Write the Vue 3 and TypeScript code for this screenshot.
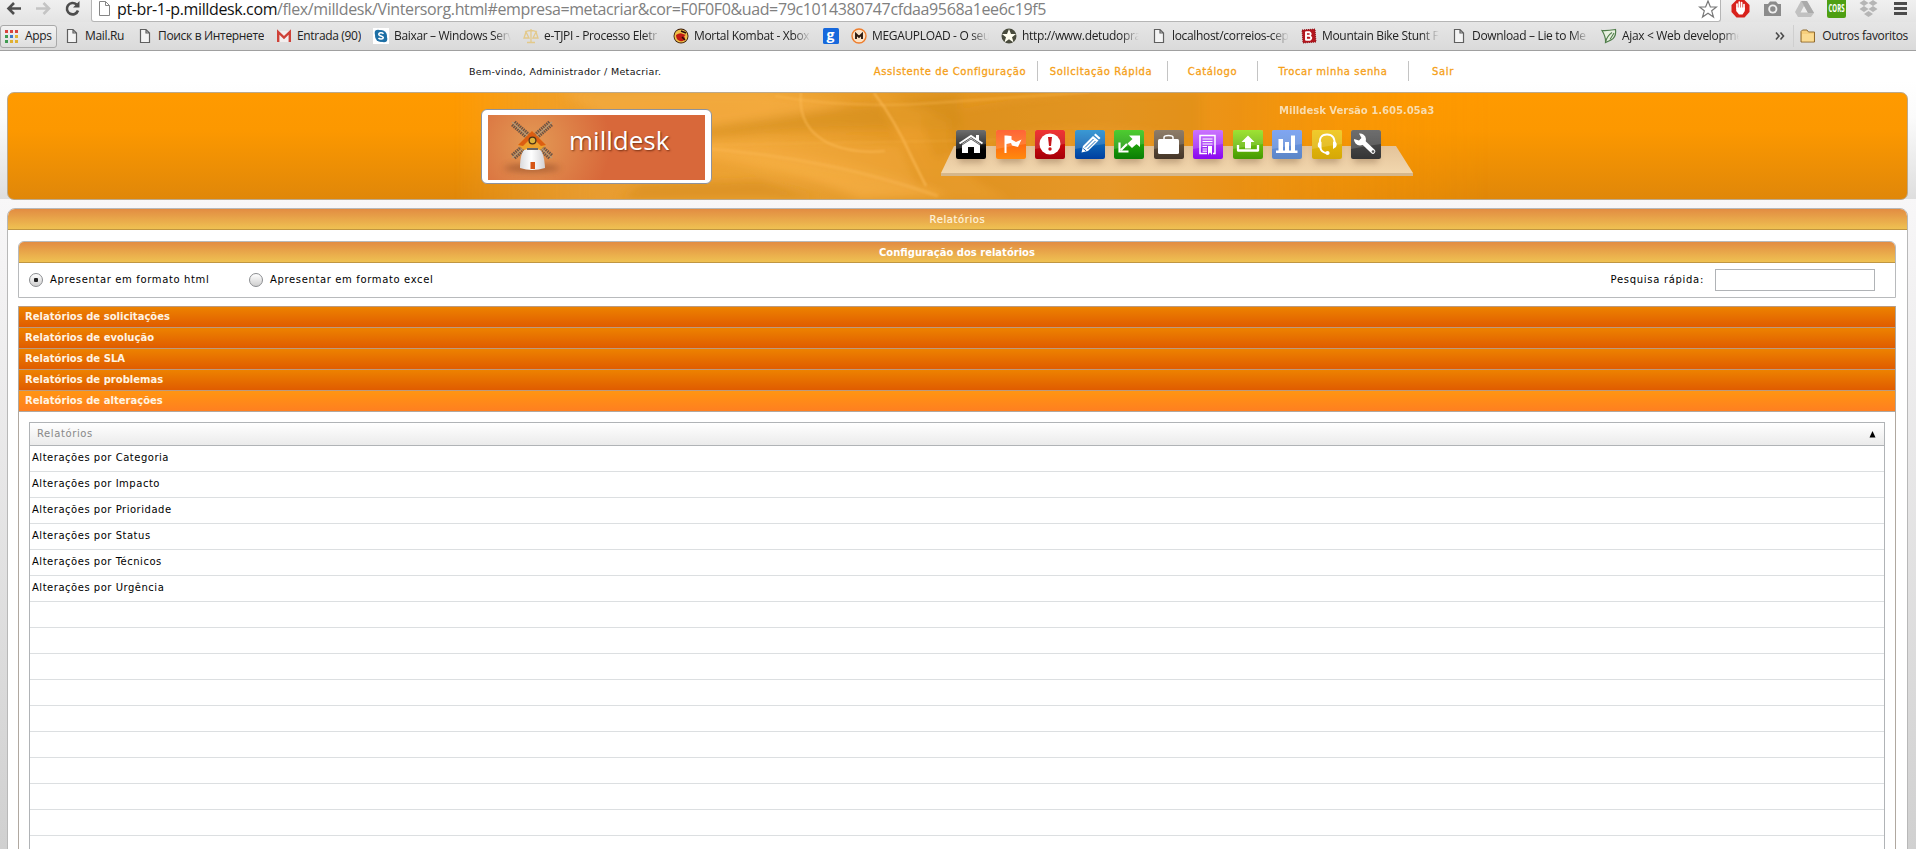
<script setup lang="ts">
interface Bookmark {
  icon: string
  label: string
  width: number
  faded?: boolean
}

const bookmarks: Bookmark[] = [
  { icon: 'page', label: 'Mail.Ru', width: 73 },
  { icon: 'page', label: 'Поиск в Интернете', width: 139 },
  { icon: 'gmail', label: 'Entrada (90)', width: 97 },
  { icon: 'skype', label: 'Baixar – Windows Serv', width: 150, faded: true },
  { icon: 'scale', label: 'e-TJPI - Processo Eletr', width: 150, faded: true },
  { icon: 'dragon', label: 'Mortal Kombat - Xbox', width: 150, faded: true },
  { icon: 'g', label: '', width: 28 },
  { icon: 'mega', label: 'MEGAUPLOAD - O seu', width: 150, faded: true },
  { icon: 'star', label: 'http://www.detudopra', width: 150, faded: true },
  { icon: 'page', label: 'localhost/correios-cep', width: 150, faded: true },
  { icon: 'b', label: 'Mountain Bike Stunt Fr', width: 150, faded: true },
  { icon: 'page', label: 'Download – Lie to Me', width: 150, faded: true },
  { icon: 'leaf', label: 'Ajax < Web developme', width: 150, faded: true },
]

const appColors = ['#d8433c', '#d8433c', '#d8433c', '#3f9b50', '#3c78c8', '#e0b030', '#3f9b50', '#e0b030', '#e0b030']

const links = [
  { label: 'Assistente de Configuração', cls: 'l1' },
  { label: 'Solicitação Rápida', cls: 'l2' },
  { label: 'Catálogo', cls: 'l3' },
  { label: 'Trocar minha senha', cls: 'l4' },
  { label: 'Sair', cls: 'l5' },
]

const tools = ['home', 'flag', 'alert', 'pencil', 'arrows', 'case', 'doc', 'upload', 'chart', 'headset', 'wrench']

const sections = [
  'Relatórios de solicitações',
  'Relatórios de evolução',
  'Relatórios de SLA',
  'Relatórios de problemas',
  'Relatórios de alterações',
]

const reports = [
  'Alterações por Categoria',
  'Alterações por Impacto',
  'Alterações por Prioridade',
  'Alterações por Status',
  'Alterações por Técnicos',
  'Alterações por Urgência',
]
const emptyRows = 10
</script>

<template>
  <div class="screen">
    <div class="toolbar">
      <svg class="nav" width="91" height="21" viewBox="0 0 91 21">
        <path d="M21 8.5H9M14 3L8.5 8.5L14 14" fill="none" stroke="#4d4d4d" stroke-width="2.6" />
        <path d="M36 8.5H48M43.500 3L49 8.500L43.500 14" fill="none" stroke="#c4c4c4" stroke-width="2.600" />
        <path d="M76.500 4.500A5.700 5.700 0 1 0 78 10.500" fill="none" stroke="#4d4d4d" stroke-width="2.600" />
        <path d="M79.500 1V7.500H73Z" fill="#4d4d4d" />
      </svg>
      <div class="omnibox">
        <svg width="11" height="16" viewBox="0 0 11 16"><path d="M.5 1.500H6.500L10.500 5.500V15.500H.5ZM6.500 1.500V5.500H10.500" fill="#fff" stroke="#858585" /></svg>
        <span class="url"><b>pt-br-1-p.milldesk.com</b>/flex/milldesk/Vintersorg.html#empresa=metacriar&amp;cor=F0F0F0&amp;uad=79c1014380747cfdaa9568a1ee6c19f5</span>
        <svg class="fav" width="20" height="20" viewBox="0 0 20 20"><path d="M10 1L12.400 7H18.500L13.700 10.800L15.500 17L10 13.300L4.500 17L6.300 10.800L1.500 7H7.600Z" fill="#fff" stroke="#777" stroke-width="1.200" /></svg>
      </div>
      <svg class="exts" width="195" height="21" viewBox="1721 0 195 21">
        <path d="M1736.500 0H1744.500L1749.500 5V12L1744.500 17.500H1736.500L1731.500 12V5Z" fill="#d8221c" />
        <path d="M1737 8V4M1739.300 8V2M1741.600 8V2.500M1744 9V4.500" stroke="#fff" stroke-width="1.700" stroke-linecap="round" />
        <path d="M1736.200 7.500H1744.800V11L1742.500 14.500H1739L1736.200 11Z" fill="#fff" />
        <path d="M1764 4H1768L1770 1.500H1776L1778 4H1781V16H1764Z" fill="#8b8b8b" /><circle cx="1772.800" cy="9" r="4.600" fill="#eee" /><circle cx="1772.800" cy="9" r="2.700" fill="#8b8b8b" />
        <path d="M1801 1H1807L1814 13L1811 17H1798L1795 12Z" fill="#c1c1c1" /><path d="M1804 6L1808 12.500H1800.500Z" fill="#eee" /><path d="M1807 1L1814 13H1808L1801.500 1Z" fill="#aaa" />
        <rect x="1827" y="-2" width="19" height="20" rx="2" fill="#4e9f12" />
        <text x="1828.500" y="12" font-size="10" font-weight="700" fill="#fff" textLength="16" lengthAdjust="spacingAndGlyphs" font-family="Open Sans, sans-serif">CORS</text>
        <path d="M1864 0L1868.500 3L1864 6L1859.500 3ZM1873 0L1877.500 3L1873 6L1868.500 3ZM1864 6L1868.500 9L1864 12L1859.500 9ZM1873 6L1877.500 9L1873 12L1868.500 9ZM1868.500 11L1873 14L1868.500 17L1864 14Z" fill="#b5b5b5" />
        <path d="M1894 3.500H1907M1894 8.500H1907M1894 13.500H1907" stroke="#4b4b4b" stroke-width="2.800" />
      </svg>
    </div>

    <div class="bookmarks">
      <div class="apps">
        <div class="dots"><i v-for="(c, i) in appColors" :key="i" :style="{ background: c }"></i></div>
        <span>Apps</span>
      </div>
      <div v-for="(b, i) in bookmarks" :key="i" class="bm" :style="{ width: b.width + 'px' }">
        <svg width="16" height="16" viewBox="0 0 16 16">
          <path v-if="b.icon === 'page'" d="M3.500 1.500H9L12.500 5V14.500H3.500ZM9 1.500V5H12.500" fill="#f4f4f4" stroke="#5f5f5f" stroke-width="1.200" />
          <g v-else-if="b.icon === 'gmail'"><path d="M1 3H15V14H1Z" fill="#f3eeee" /><path d="M2.200 14V4L8 9.500L13.800 4V14" fill="none" stroke="#cf4138" stroke-width="2.400" /></g>
          <g v-else-if="b.icon === 'skype'"><rect width="16" height="16" fill="#fff" /><circle cx="8" cy="8" r="6" fill="#1d6fa5" /><circle cx="5" cy="5" r="3.300" fill="#1d6fa5" /><circle cx="11" cy="11" r="3.300" fill="#1d6fa5" /><path d="M10.500 5.800C9 4.200 5.500 4.600 5.800 6.500C6.200 8.300 10.200 7.600 10.300 9.600C10.200 11.600 6.500 11.500 5.500 10" fill="none" stroke="#fff" stroke-width="1.500" /></g>
          <path v-else-if="b.icon === 'scale'" d="M8 1V14M2 4Q8 1 14 4M3 4L1 10H6ZM13 4L10 10H15ZM4 14.500H12" fill="none" stroke="#e3c98a" stroke-width="1.300" />
          <g v-else-if="b.icon === 'dragon'"><circle cx="8" cy="8" r="7.500" fill="#3a1a0a" /><circle cx="8" cy="8" r="6.600" fill="#efc04a" /><path d="M3 7Q7 4 10 6L13 7Q10 8 12 10Q11 14 7 13Q3 12 3 7Z" fill="#c11a12" /><path d="M8 3L13 5M9 9L12 12" stroke="#2a0d05" stroke-width="1.500" /></g>
          <g v-else-if="b.icon === 'g'"><rect width="16" height="16" rx="1.500" fill="#1668dc" /><text x="3.600" y="11.500" font-size="14" font-weight="700" fill="#fff" font-family="Open Sans, sans-serif">g</text></g>
          <g v-else-if="b.icon === 'mega'"><circle cx="8" cy="8" r="7" fill="#fbe3c8" stroke="#ee7d2c" stroke-width="1.400" /><path d="M5 11V6L8 9L11 6V11" fill="none" stroke="#2d1a10" stroke-width="1.900" /></g>
          <g v-else-if="b.icon === 'star'"><circle cx="8" cy="8" r="7.500" fill="#494b3d" /><path d="M8 1L10 6H15L11 9.300L12.600 14.500L8 11.300L3.400 14.500L5 9.300L1 6H6Z" fill="#fffef0" /></g>
          <g v-else-if="b.icon === 'b'"><path d="M1 2L14 1L15 14L2 15Z" fill="#b3161e" stroke="#8c1016" stroke-dasharray="1 1" /><path d="M5 3.500V12.500M5 4.200H8.500Q11 6 8.500 7.800H5M8.500 7.800Q12 10 8.800 11.800H5" fill="none" stroke="#fff" stroke-width="1.900" /></g>
          <g v-else><path d="M1 2.500Q6 3 14.500 1.500Q15.500 9 10 12L4.500 14.500Q5 9 1 2.500Z" fill="#e8f0e0" stroke="#4f7d4a" stroke-width="1.200" /><path d="M4.500 14Q6 8 11 4.500M9 11.500L13 5" fill="none" stroke="#4f7d4a" stroke-width="1.100" /></g>
        </svg>
        <span v-if="b.label" :class="{ faded: b.faded }">{{ b.label }}</span>
      </div>
      <div class="others">
        <svg width="10" height="10" viewBox="0 0 10 10"><path d="M1 1.500L4 5L1 8.500M5.500 1.500L8.500 5L5.500 8.500" fill="none" stroke="#4a4a4a" stroke-width="1.600" /></svg>
        <i class="sep"></i>
        <svg class="folder" width="17" height="14" viewBox="0 0 17 14"><path d="M1 13V2.500L2.500 1H7L8.500 3H14.500V13Z" fill="#f7cf7c" stroke="#8f6a2f" /><path d="M2 12.300V5H13.500V12.300Z" fill="#fbdb91" /></svg>
        <span>Outros favoritos</span>
      </div>
    </div>

    <div class="head">
      <div class="top">
        <span class="welcome">Bem-vindo, Administrador / Metacriar.</span>
        <a v-for="l in links" :key="l.cls" :class="l.cls"><span>{{ l.label }}</span></a>
      </div>
      <div class="banner">
        <svg class="waves" width="1900" height="107" viewBox="7 92 1900 107">
          <defs>
            <linearGradient id="base" x1="7" x2="1907" gradientUnits="userSpaceOnUse">
              <stop offset=".235" stop-color="#e9a94b" stop-opacity="0" />
              <stop offset=".31" stop-color="#e9a038" />
              <stop offset=".4" stop-color="#eda83f" />
              <stop offset=".49" stop-color="#de9526" />
              <stop offset=".58" stop-color="#e79a2d" />
              <stop offset=".65" stop-color="#ea9216" />
              <stop offset=".78" stop-color="#ff9a00" stop-opacity="0" />
            </linearGradient>
            <filter id="soft" x="-20%" y="-20%" width="140%" height="140%"><feGaussianBlur stdDeviation="5" /></filter>
            <filter id="thin"><feGaussianBlur stdDeviation=".9" /></filter>
          </defs>
          <rect x="7" y="92" width="1900" height="107" fill="url(#base)" />
          <g filter="url(#soft)">
            <path d="M560 92L760 92L850 104L700 130L610 120Z" fill="#f4b050" opacity=".6" />
            <path d="M700 128Q840 106 960 94V130Q860 125 700 138Z" fill="#c98b1e" opacity=".55" />
            <path d="M700 144Q830 150 950 197L860 199Q780 165 690 155Z" fill="#ffbd58" opacity=".6" />
            <path d="M700 138L900 145L920 190L700 150Z" fill="#f2ad48" opacity=".6" />
            <path d="M875 92L950 120Q940 170 1010 199H930Z" fill="#ffb64a" opacity=".25" />
            <path d="M640 185L760 180L820 199H620Z" fill="#d28c1e" opacity=".6" />
            <path d="M920 120Q1000 96 1100 92H1200V140Q1040 110 935 160Z" fill="#cc8a1c" opacity=".35" />
          </g>
          <g filter="url(#thin)" fill="none" stroke="#ffc46a">
            <path d="M801 92Q797 128 830 144Q855 154 885 151" stroke-width="1.500" opacity=".75" />
            <path d="M874 93Q895 120 912 158L926 186" stroke-width="2" opacity=".75" />
            <path d="M700 148Q830 158 938 196" stroke-width="3" opacity=".4" />
            <path d="M775 96Q850 109 935 103Q1010 98 1090 92" stroke-width="2" opacity=".4" />
            <path d="M700 145Q850 142 1000 140" stroke-width="2" opacity=".2" />
          </g>
        </svg>

        <div class="logo">
          <svg width="217" height="65" viewBox="488 115 217 65">
            <defs>
              <radialGradient id="glow" cx="532" cy="144" r="78" gradientUnits="userSpaceOnUse"><stop offset="0" stop-color="#e39a55" /><stop offset="1" stop-color="#d8683a" /></radialGradient>
              <linearGradient id="tower"><stop offset="0" stop-color="#d9dadd" /><stop offset=".45" stop-color="#fff" /><stop offset="1" stop-color="#d3d2d4" /></linearGradient>
              <filter id="sh" x="-30%" y="-80%" width="160%" height="260%"><feGaussianBlur stdDeviation="3" /></filter>
            </defs>
            <rect x="488" y="115" width="217" height="65" fill="url(#glow)" />
            <ellipse cx="532" cy="168" rx="28" ry="4" fill="#8e4a26" opacity=".6" filter="url(#sh)" />
            <g stroke="#4d4743" stroke-width="7" stroke-dasharray="1.500 .8" opacity=".8">
              <path d="M530 138L513 123M534 138L551 123M530 142L513 157M534 142L551 157" />
            </g>
            <path d="M532 140L512 122M532 140L552 122M532 140L512 158M532 140L552 158" stroke="#b99a76" stroke-width="1.400" />
            <path d="M520 168Q520 149 528 148H537Q544 149 545 168Q532 172 520 168Z" fill="url(#tower)" />
            <path d="M530.500 169V162H535V169Z" fill="#d65514" />
            <path d="M532 131L546 145L540 150L532 148L524 150L518 145Z" fill="#eda22c" />
            <path d="M532 131L518 145L523 146L532 137L541 146L546 145Z" fill="#dc5e12" />
            <circle cx="532.500" cy="140.500" r="3.400" fill="#ddb33b" stroke="#4b3217" stroke-width="1.300" />
            <path d="M527 149H538" stroke="#6a6664" stroke-width="2" />
          </svg>
          <span>milldesk</span>
        </div>

        <div class="version">Milldesk Versão 1.605.05a3</div>
        <div class="dock">
          <svg class="shelf" width="474" height="31" viewBox="940 146 474 31">
            <defs><linearGradient id="plank" x2="0" y2="1"><stop offset="0" stop-color="#e3c39a" /><stop offset="1" stop-color="#f2d7ae" /></linearGradient></defs>
            <path d="M954 146H1396L1413 173H941Z" fill="url(#plank)" />
            <path d="M941 173H1413V176H941Z" fill="#d5b78c" />
          </svg>
          <div class="tools">
            <div v-for="t in tools" :key="t" class="tool" :class="t">
              <svg width="30" height="29" viewBox="0 0 30 29">
                <path d="M0 0H30V14Q15 16 0 19Z" fill="#fff" opacity=".15" />
                <g v-if="t === 'home'" fill="#fff"><path d="M6 14L15 8L24 14V23H18V17H12V23H6Z" /><path d="M3.500 13.500L15 6L26.500 13.500" fill="none" stroke="#fff" stroke-width="2" /><path d="M5.500 15.300L15 9L24.500 15.300" fill="none" stroke="#333" stroke-width=".8" /><rect x="20" y="5" width="3" height="5" /></g>
                <path v-else-if="t === 'flag'" d="M8.500 5.500H10.500L15.500 6V9.500L20 12L25.500 9.500L22 17L16 15.500L15 13L10.500 14V23H8.500Z" fill="#fff" />
                <g v-else-if="t === 'alert'"><circle cx="15" cy="14" r="10.500" fill="#fff" /><path d="M13 7H17L16 16H14Z" fill="#c8141a" /><circle cx="15" cy="19" r="1.700" fill="#c8141a" /></g>
                <g v-else-if="t === 'pencil'"><path d="M6.500 22.500L8 16L18 6L23.500 10.500L13 21Z" fill="#fff" /><path d="M19 5L20.500 3.500L25.500 8L24 9.500Z" fill="#fff" /><path d="M10 17.500L18.500 9M12.500 19L20.500 11" stroke="#1a6cb9" stroke-width="1" /><path d="M8.200 18.500L11 20.800" stroke="#1a5fb0" stroke-width="1" /></g>
                <g v-else-if="t === 'arrows'"><path d="M15 5.500H26V17L22.500 14L18 18L13.500 13.500L18.500 9Z" fill="#fff" /><path d="M13 14L7 20M5.500 12.500V21.500H14.500" fill="none" stroke="#fff" stroke-width="2.200" /></g>
                <g v-else-if="t === 'case'"><rect x="4" y="9" width="21" height="15" rx="1.500" fill="#fff" /><path d="M10 9V7.500Q10 5.500 14.500 5.500Q19 5.500 19 7.500V9" fill="none" stroke="#fff" stroke-width="1.500" /></g>
                <g v-else-if="t === 'doc'" fill="none" stroke="#fff"><path d="M14 23.500H7V5.500H22V23.500H20" stroke-width="1.500" /><path d="M9.500 9H19.500M9.500 11.500H19.500M9.500 14H19.500M9.500 16.500H14M9.500 19H14M9.500 21.200H14" stroke-width="1.200" /><path d="M15 16H19V25L17 22.500L15 25Z" fill="#fff" stroke="none" /></g>
                <g v-else-if="t === 'upload'"><path d="M15 5.500L21.500 12H18V18.500H12V12H8.500Z" fill="#fff" /><path d="M5 15V20.500H25V15" fill="none" stroke="#fff" stroke-width="2.300" stroke-linejoin="round" /></g>
                <path v-else-if="t === 'chart'" d="M4 23V20.500H6.500V9H11V20.500H13V12H17V20.500H19V5.500H23V20.500H25.500V23Z" fill="#fff" />
                <g v-else-if="t === 'headset'" fill="none" stroke="#fff"><path d="M8 15Q6.500 4.500 15 4.500Q23.500 4.500 22.500 15M8 17Q9 22 14 23" stroke-width="1.800" /><path d="M8 11Q5 13 6 17L9.500 19V12ZM22.500 11Q26 13 24 17L21 19V12Z" fill="#fff" stroke="none" /><circle cx="15.500" cy="23" r="2.100" fill="#fff" stroke="none" /></g>
                <g v-else><path d="M11 11L22 21.500" stroke="#fff" stroke-width="4.600" stroke-linecap="round" /><path d="M8 3.500A6 6 0 1 1 3 9L8 10.500L10.500 8Z" fill="#fff" /><circle cx="22" cy="21.500" r="1.300" fill="#555" /></g>
              </svg>
            </div>
          </div>
        </div>
      </div>
    </div>

    <div class="content">
      <div class="panel">
        <div class="bar title">Relatórios</div>
        <div class="inner">
          <div class="config">
            <div class="bar strong">Configuração dos relatórios</div>
            <div class="options">
              <i class="radio on"></i><span class="r1">Apresentar em formato html</span>
              <i class="radio"></i><span>Apresentar em formato excel</span>
              <span class="search">Pesquisa rápida:</span>
              <input type="text" />
            </div>
          </div>
          <div class="accordion">
            <div v-for="(s, i) in sections" :key="s" class="section" :class="{ open: i === 4 }">{{ s }}</div>
            <div class="pane">
              <div class="grid">
                <div class="ghead"><span>Relatórios</span><svg width="7" height="7" viewBox="0 0 7 7"><path d="M3.500 0L6.500 6.500H.5Z" fill="#000" /></svg></div>
                <div v-for="r in reports" :key="r" class="row">{{ r }}</div>
                <div v-for="n in emptyRows" :key="n" class="row"></div>
              </div>
            </div>
          </div>
        </div>
      </div>
    </div>
  </div>
</template>

<style>
body { margin: 0; overflow: hidden; }
</style>

<style scoped>
.screen { width: 1916px; height: 849px; overflow: hidden; display: flex; flex-direction: column; font: 10px/12px "DejaVu Sans", Verdana, sans-serif; color: #000; }
.screen * { box-sizing: border-box; }
svg { display: block; flex: none; }
.toolbar { height: 22px; flex: none; display: flex; background: linear-gradient(#f0f0f0, #e4e4e4); }
.omnibox { width: 1631px; height: 22px; background: #fff; border: 1px solid #b5b5b5; border-top: 0; border-radius: 0 0 3px 3px; display: flex; align-items: flex-start; padding-left: 7px; }
.url { margin-left: 7px; font: 16px/18px "Open Sans", "Noto Sans", sans-serif; letter-spacing: -.38px; color: #808080; white-space: nowrap; }
.url b { font-weight: 400; color: #111; }
.fav { margin-left: auto; margin-right: 2px; }
.bookmarks { height: 29px; flex: none; display: flex; align-items: center; background: linear-gradient(#e6e6e6, #dadada); border-bottom: 1px solid #a0a0a0; font: 12px/16px "Open Sans", "Noto Sans", sans-serif; letter-spacing: -.33px; color: #222; white-space: nowrap; }
.apps { width: 57px; height: 23px; border: 1px solid #a9a9a9; border-radius: 3px; background: linear-gradient(#f3f3f3, #dedede); display: flex; align-items: center; padding-left: 4px; margin-right: 7px; }
.dots { display: grid; grid-template-columns: repeat(3, 3px); gap: 2px; margin-right: 7px; }
.dots i { height: 3px; }
.bm { display: flex; align-items: center; flex: none; }
.bm span { margin-left: 5px; overflow: hidden; }
.bm .faded { width: 117px; mask-image: linear-gradient(90deg, #000 85%, transparent); }
.others { margin-left: auto; display: flex; align-items: center; padding-right: 8px; }
.sep { width: 1px; height: 22px; background: #cfcfcf; margin: 0 6px 0 8px; }
.folder { margin-right: 5px; }

.head { height: 148px; flex: none; background: linear-gradient(#fff 20%, #fbfbfb 45%, #dedede); }
.top { height: 41px; display: flex; align-items: center; padding: 0 0 1px 469px; color: #f5a017; white-space: nowrap; }
.welcome { width: 391px; color: #111; font-size: 9.500px; letter-spacing: .32px; padding-top: 1px; }
.top a { height: 20px; line-height: 22px; padding: 0; text-align: center; letter-spacing: .6px; border-right: 1px solid #c4c4c4; -webkit-text-stroke: .3px #f5a017; }
.l1 { width: 178px; padding-left: 3px !important; }
.l2 { width: 130px; padding-right: 3px !important; }
.l3 { width: 90px; }
.l4 { width: 151px; }
.top .l5 { width: 68px; border: 0; }
.banner { position: relative; width: 1901px; height: 108px; margin-left: 7px; border: 1px solid #bca98b; border-radius: 7px; overflow: hidden; background: linear-gradient(#ff9a00, #fc9800 35%, #e08709); }
.waves { position: absolute; left: -1px; top: -1px; opacity: .85; }
.logo { position: absolute; left: 473px; top: 16px; width: 231px; height: 75px; padding: 5px 6px; border: 1px solid #8e929c; border-radius: 6px; background: #fff; }
.logo span { position: absolute; left: 87px; top: 14px; font: 26px/32px "Open Sans", sans-serif; letter-spacing: 0; color: #fff; text-shadow: 1px 1px 2px rgba(70, 20, 0, .7); }
.version { position: absolute; left: 1271px; top: 12px; font-weight: 700; color: #f8ddb0; white-space: nowrap; }
.dock { position: absolute; left: 932px; top: 37px; width: 474px; height: 50px; }
.shelf { position: absolute; top: 16px; left: 0; }
.tools { position: relative; display: flex; justify-content: space-between; width: 425px; margin-left: 16px; }
.tool { width: 30px; height: 29px; border-radius: 2px; overflow: visible; box-shadow: 0 7px 6px -3px rgba(120, 90, 60, .35); }
.home { background: linear-gradient(#555, #000 70%); }
.flag { background: linear-gradient(#ff4a14, #ff8a0e); }
.alert { background: linear-gradient(#ee1010, #a50008); }
.pencil { background: linear-gradient(#1888cc, #003fa0); }
.arrows { background: linear-gradient(#2fc40c, #0a7d06); }
.case { background: linear-gradient(#7b664d, #453628); }
.doc { background: linear-gradient(#c25bff, #8a08ef); }
.upload { background: linear-gradient(#8ede10, #459a04); }
.chart { background: linear-gradient(#6a97f0, #5c86c6); }
.headset { background: linear-gradient(#efc206, #d5a808); }
.wrench { background: linear-gradient(#555, #353535); }

.content { height: 650px; flex: none; background: linear-gradient(#f8f7f8, #d0d0d0); padding: 9px 8px 0 7px; }
.panel { height: 700px; border: 1px solid #b8b8b8; border-radius: 8px 8px 0 0; background: #fff; overflow: hidden; }
.bar { height: 21px; line-height: 21px; text-align: center; color: #fff4dc; background: linear-gradient(#e28c42, #efc152); border-bottom: 1px solid #c09642; }
.title { letter-spacing: .6px; -webkit-text-stroke: .2px #fff4dc; }
.strong { font-weight: 700; color: #fff; letter-spacing: 0; }
.inner { padding: 11px 11px 0 10px; }
.config { height: 57px; border: 1px solid #b8babc; border-radius: 6px 6px 0 0; overflow: hidden; }
.options { display: flex; align-items: center; height: 34px; padding: 0 20px 0 10px; letter-spacing: .64px; }
.radio { width: 14px; height: 14px; border: 1px solid #8b8d90; border-radius: 50%; background: linear-gradient(#fff, #cfcfcf); margin-right: 7px; flex: none; }
.on { background: radial-gradient(circle, #222 2px, transparent 2.500px), linear-gradient(#fff, #cfcfcf); }
.r1 { width: 199px; }
.search { margin-left: auto; margin-right: 11px; letter-spacing: .7px; }
input { width: 160px; height: 22px; border: 1px solid #b0b3b6; background: #fff; padding: 0; }
.accordion { margin-top: 8px; border: 1px solid #b0a8a0; border-top: 0; }
.section { height: 21px; line-height: 19px; padding-left: 6px; border-top: 1px solid #bb9a80; color: #fff4e4; font-weight: 700; letter-spacing: .02px; background: linear-gradient(#ed8200, #e05c00); }
.open { height: 22px; border-bottom: 1px solid #b0a8a0; background: linear-gradient(#ff9512, #ff7f20); }
.pane { padding: 10px; background: #fff; }
.grid { border: 1px solid #b0b3b6; height: 500px; }
.ghead { height: 23px; border-bottom: 1px solid #b0b3b6; background: linear-gradient(#fff, #ebebeb); display: flex; align-items: center; justify-content: space-between; padding: 0 8px 0 7px; color: #888; letter-spacing: .6px; }
.row { height: 26px; line-height: 23px; padding-left: 2px; border-bottom: 1px solid #dcdfe1; letter-spacing: .52px; }
</style>
